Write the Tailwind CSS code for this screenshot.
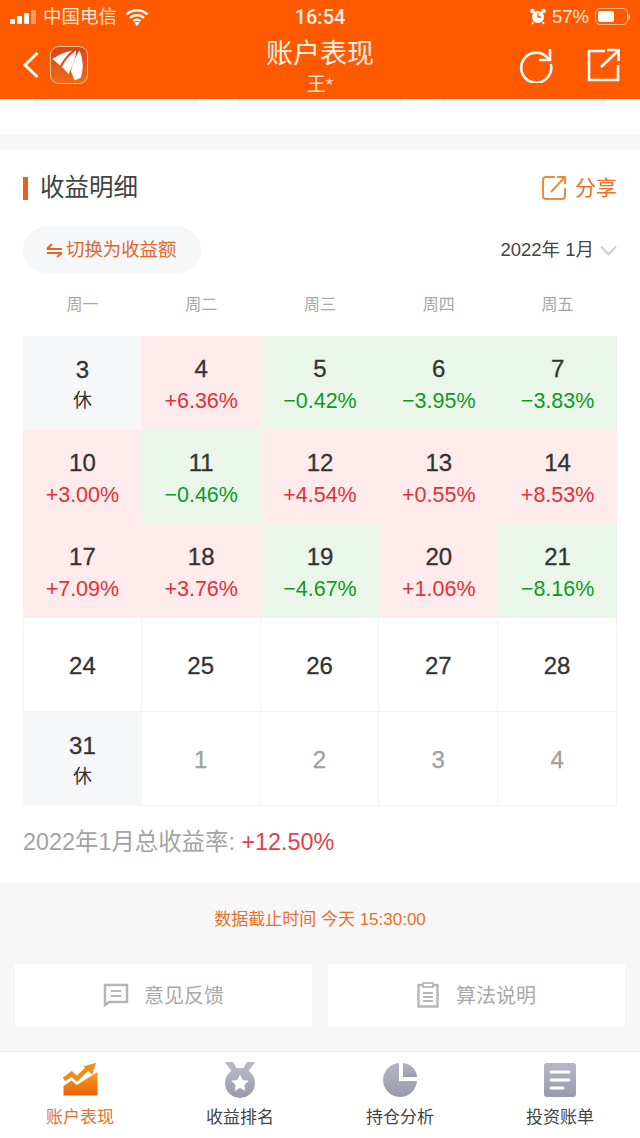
<!DOCTYPE html>
<html><head><meta charset="utf-8"><script src="https://cdn.jsdelivr.net/npm/@tailwindcss/browser@4"></script></head>
<body class="m-0 bg-white">
<div class="w-[640px] h-[1138px] overflow-hidden flex flex-col bg-[#f7f7f7] font-['Liberation_Sans','Noto_Sans_CJK_SC',sans-serif]">
  <header class="h-[99px] shrink-0 bg-[#ff5a00] text-white relative">
    <div class="h-[33px] flex items-center justify-between px-[10px] text-[18px]">
      <div class="flex items-center gap-[6px] w-[200px]">
        <svg width="26" height="14" viewBox="0 0 26 14"><rect x="0" y="9" width="5" height="5" rx="1" fill="#fff"/><rect x="7" y="6" width="5" height="8" rx="1" fill="#fff"/><rect x="14" y="3" width="5" height="11" rx="1" fill="#fff"/><rect x="21" y="0" width="5" height="14" rx="1" fill="#ffffff66"/></svg>
        <span class="text-[#ffe6d6] ml-[1px] text-[18.5px]">中国电信</span>
        <svg width="24" height="18" viewBox="0 0 24 18" class="ml-[2px]"><path d="M1.500 6.500a15 15 0 0 1 21 0M5 10a10 10 0 0 1 14 0M8.500 13.200a5 5 0 0 1 7 0" fill="none" stroke="#fff" stroke-width="2.400"/><path d="M12 18l-2.500-3a3.500 3.500 0 0 1 5 0z" fill="#fff"/></svg>
      </div>
      <div class="text-[#fff1e8] text-[20px] font-['Roboto'] font-medium">16:54</div>
      <div class="flex items-center justify-end gap-[6px] w-[200px]">
        <svg width="16" height="17" viewBox="0 0 16 17"><circle cx="8" cy="9" r="6" fill="#fff"/><path d="M8 5.500V9h3" fill="none" stroke="#ff5a00" stroke-width="1.300"/><circle cx="2.500" cy="3" r="2.300" fill="#fff"/><circle cx="13.500" cy="3" r="2.300" fill="#fff"/><path d="M3.500 14l-1.500 2M12.500 14l1.500 2" stroke="#fff" stroke-width="1.500"/></svg>
        <span class="text-[#ffe6d6] text-[18.5px]">57%</span>
        <div class="flex items-center">
          <div class="w-[33px] h-[17px] rounded-[5px] border border-[#ffb48a] p-[2px]"><div class="w-[16px] h-full bg-white rounded-[2px]"></div></div>
          <div class="w-[2px] h-[6px] bg-[#ffb48a] rounded-r-sm"></div>
        </div>
      </div>
    </div>
    <div class="relative h-[66px]">
      <svg class="absolute left-[22px] top-[18px]" width="18" height="28" viewBox="0 0 18 28"><path d="M15.500 2L3 14l12.500 12" fill="none" stroke="#fff" stroke-width="3"/></svg>
      <div class="absolute left-[50px] top-[13px] w-[38px] h-[38px] rounded-[9px] border border-[#ffc09a] bg-gradient-to-b from-[#d9431c] to-[#f06a14] overflow-hidden">
        <svg width="36" height="36" viewBox="0 0 36 36"><path d="M1.500 12C7 8 14 5 21 3.500 16 8 12 13 9 18.500z" fill="#fff"/><path d="M11 20C14 13 19 8 25 3.500 25 10 22 18 17.500 27z" fill="#fff"/><path d="M20 24C22 15 25 9 28.500 3.500 32 12 33 22 29.500 31l-6 2.500z" fill="#fff"/></svg>
      </div>
      <div class="absolute inset-x-0 top-[3px] text-center text-[27px] leading-[36px] text-[#fff1e8]">账户表现</div>
      <div class="absolute inset-x-0 top-[40px] text-center text-[19px] leading-[24px] text-[#ffe0cc]">王*</div>
      <svg class="absolute left-[519px] top-[14px]" width="36" height="36" viewBox="0 0 36 36"><path d="M30.500 13A15 15 0 1 0 33 19" fill="none" stroke="#fff" stroke-width="2.600" stroke-linecap="round" transform="translate(-1 -1)"/><path d="M31 2v11H20" fill="none" stroke="#fff" stroke-width="2.600"/></svg>
      <svg class="absolute left-[587px] top-[15px]" width="34" height="34" viewBox="0 0 34 34"><path d="M18 3H2v29h29V17" fill="none" stroke="#fff" stroke-width="2.600"/><path d="M14 19L31 3M20 2h11.500v11" fill="none" stroke="#fff" stroke-width="2.600"/></svg>
    </div>
  </header>

  <div class="h-[35px] shrink-0 bg-white relative">
    <div class="flex h-[6px] pl-[33px]">
      <div class="w-[165px] bg-[#f6f7fb]"></div>
      <div class="w-[165px] ml-[39px] bg-[#f6f7fb]"></div>
      <div class="w-[165px] ml-[39px] bg-[#f6f7fb]"></div>
    </div>
  </div>
  <div class="h-[15px] shrink-0 bg-[#f7f7f7]"></div>

  <section class="h-[733px] shrink-0 bg-white px-[23px] relative">
    <div class="flex items-center justify-between pt-[18px] h-[77px] pb-[17px]">
      <div class="flex items-center">
        <div class="w-[5px] h-[23px] bg-[#e8601c]"></div>
        <div class="ml-[12px] text-[24.500px] leading-[30px] text-[#444]">收益明细</div>
      </div>
      <div class="flex items-center gap-[8px]">
        <svg width="26" height="26" viewBox="0 0 26 26"><path d="M14 2H5a3 3 0 0 0-3 3v16a3 3 0 0 0 3 3h16a3 3 0 0 0 3-3v-8" fill="none" stroke="#f08a3c" stroke-width="2"/><path d="M10 17L23 3M16 2h8v7" fill="none" stroke="#f08a3c" stroke-width="2"/></svg>
        <span class="text-[21px] leading-[30px] text-[#e8702c]">分享</span>
      </div>
    </div>
    <div class="flex items-center justify-between mt-[1px]">
      <div class="w-[178px] h-[46px] rounded-[23px] bg-[#f6f7f9] flex items-center pl-[23px] text-[#e0662a]">
        <svg width="17" height="16" viewBox="0 0 17 16"><path d="M1 7h15M1 7l5-5M1 11h15M16 11l-5 4" fill="none" stroke="#e0662a" stroke-width="2"/></svg>
        <span class="ml-[3px] text-[18.400px] leading-[24px]">切换为收益额</span>
      </div>
      <div class="flex items-center text-[18.500px] text-[#444]">
        <span>2022年 1月</span>
        <svg class="ml-[6px]" width="17" height="11" viewBox="0 0 17 11"><path d="M1 1.500l7.500 8 7.500-8" fill="none" stroke="#d0d0d0" stroke-width="2.200"/></svg>
      </div>
    </div>
    <div class="grid grid-cols-5 w-[594px] h-[63px] items-center text-center text-[16px] text-[#a8a8a8]">
      <div>周一</div><div>周二</div><div>周三</div><div>周四</div><div>周五</div>
    </div>
    <div class="grid grid-cols-5 w-[594px] grid-rows-[94px_94px_94px_94px_94px] text-center">
      <div class="bg-[#f6f7f9] flex flex-col justify-center pt-[3px]"><div class="text-[24px] leading-[32px] text-[#333] [-webkit-text-stroke:0.3px]">3</div><div class="text-[19px] leading-[30px] text-[#333]">休</div></div>
      <div class="bg-[#ffebeb] flex flex-col justify-center pt-[3px]"><div class="text-[24px] leading-[32px] text-[#333] [-webkit-text-stroke:0.3px]">4</div><div class="text-[21.500px] leading-[32px] text-[#e2303a]">+6.36%</div></div>
      <div class="bg-[#eaf6ea] flex flex-col justify-center pt-[3px]"><div class="text-[24px] leading-[32px] text-[#333] [-webkit-text-stroke:0.3px]">5</div><div class="text-[21.500px] leading-[32px] text-[#0f9a1e]">−0.42%</div></div>
      <div class="bg-[#eaf6ea] flex flex-col justify-center pt-[3px]"><div class="text-[24px] leading-[32px] text-[#333] [-webkit-text-stroke:0.3px]">6</div><div class="text-[21.500px] leading-[32px] text-[#0f9a1e]">−3.95%</div></div>
      <div class="bg-[#eaf6ea] flex flex-col justify-center pt-[3px]"><div class="text-[24px] leading-[32px] text-[#333] [-webkit-text-stroke:0.3px]">7</div><div class="text-[21.500px] leading-[32px] text-[#0f9a1e]">−3.83%</div></div>

      <div class="bg-[#ffebeb] flex flex-col justify-center pt-[3px]"><div class="text-[24px] leading-[32px] text-[#333] [-webkit-text-stroke:0.3px]">10</div><div class="text-[21.500px] leading-[32px] text-[#e2303a]">+3.00%</div></div>
      <div class="bg-[#eaf6ea] flex flex-col justify-center pt-[3px]"><div class="text-[24px] leading-[32px] text-[#333] [-webkit-text-stroke:0.3px]">11</div><div class="text-[21.500px] leading-[32px] text-[#0f9a1e]">−0.46%</div></div>
      <div class="bg-[#ffebeb] flex flex-col justify-center pt-[3px]"><div class="text-[24px] leading-[32px] text-[#333] [-webkit-text-stroke:0.3px]">12</div><div class="text-[21.500px] leading-[32px] text-[#e2303a]">+4.54%</div></div>
      <div class="bg-[#ffebeb] flex flex-col justify-center pt-[3px]"><div class="text-[24px] leading-[32px] text-[#333] [-webkit-text-stroke:0.3px]">13</div><div class="text-[21.500px] leading-[32px] text-[#e2303a]">+0.55%</div></div>
      <div class="bg-[#ffebeb] flex flex-col justify-center pt-[3px]"><div class="text-[24px] leading-[32px] text-[#333] [-webkit-text-stroke:0.3px]">14</div><div class="text-[21.500px] leading-[32px] text-[#e2303a]">+8.53%</div></div>

      <div class="bg-[#ffebeb] flex flex-col justify-center pt-[3px]"><div class="text-[24px] leading-[32px] text-[#333] [-webkit-text-stroke:0.3px]">17</div><div class="text-[21.500px] leading-[32px] text-[#e2303a]">+7.09%</div></div>
      <div class="bg-[#ffebeb] flex flex-col justify-center pt-[3px]"><div class="text-[24px] leading-[32px] text-[#333] [-webkit-text-stroke:0.3px]">18</div><div class="text-[21.500px] leading-[32px] text-[#e2303a]">+3.76%</div></div>
      <div class="bg-[#eaf6ea] flex flex-col justify-center pt-[3px]"><div class="text-[24px] leading-[32px] text-[#333] [-webkit-text-stroke:0.3px]">19</div><div class="text-[21.500px] leading-[32px] text-[#0f9a1e]">−4.67%</div></div>
      <div class="bg-[#ffebeb] flex flex-col justify-center pt-[3px]"><div class="text-[24px] leading-[32px] text-[#333] [-webkit-text-stroke:0.3px]">20</div><div class="text-[21.500px] leading-[32px] text-[#e2303a]">+1.06%</div></div>
      <div class="bg-[#eaf6ea] flex flex-col justify-center pt-[3px]"><div class="text-[24px] leading-[32px] text-[#333] [-webkit-text-stroke:0.3px]">21</div><div class="text-[21.500px] leading-[32px] text-[#0f9a1e]">−8.16%</div></div>

      <div class="border-r border-b border-l border-[#f3f3f3] flex items-center justify-center pt-[2px] text-[24px] text-[#333] [-webkit-text-stroke:0.3px_#333]">24</div>
      <div class="border-r border-b border-[#f3f3f3] flex items-center justify-center pt-[2px] text-[24px] text-[#333] [-webkit-text-stroke:0.3px_#333]">25</div>
      <div class="border-r border-b border-[#f3f3f3] flex items-center justify-center pt-[2px] text-[24px] text-[#333] [-webkit-text-stroke:0.3px_#333]">26</div>
      <div class="border-r border-b border-[#f3f3f3] flex items-center justify-center pt-[2px] text-[24px] text-[#333] [-webkit-text-stroke:0.3px_#333]">27</div>
      <div class="border-r border-b border-[#f3f3f3] flex items-center justify-center pt-[2px] text-[24px] text-[#333] [-webkit-text-stroke:0.3px_#333]">28</div>

      <div class="bg-[#f6f7f9] flex flex-col justify-center pt-[3px]"><div class="text-[24px] leading-[32px] text-[#333] [-webkit-text-stroke:0.3px]">31</div><div class="text-[19px] leading-[30px] text-[#333]">休</div></div>
      <div class="border-r border-b border-[#f3f3f3] flex items-center justify-center pt-[2px] text-[24px] text-[#a0a0a0] [-webkit-text-stroke:0.3px_#a0a0a0]">1</div>
      <div class="border-r border-b border-[#f3f3f3] flex items-center justify-center pt-[2px] text-[24px] text-[#a0a0a0] [-webkit-text-stroke:0.3px_#a0a0a0]">2</div>
      <div class="border-r border-b border-[#f3f3f3] flex items-center justify-center pt-[2px] text-[24px] text-[#a0a0a0] [-webkit-text-stroke:0.3px_#a0a0a0]">3</div>
      <div class="border-r border-b border-[#f3f3f3] flex items-center justify-center pt-[2px] text-[24px] text-[#a0a0a0] [-webkit-text-stroke:0.3px_#a0a0a0]">4</div>
    </div>
    <div class="mt-[21px] text-[23.400px] leading-[30px] text-[#a3a3a3]">2022年1月总收益率: <span class="text-[#e2404a]">+12.50%</span></div>
  </section>

  <div class="text-center text-[17px] leading-[22px] text-[#e8702c] pt-[27px] h-[82px] shrink-0">数据截止时间 今天 15:30:00</div>
  <div class="flex gap-[16px] px-[15px] h-[62px] shrink-0">
    <div class="flex-1 bg-white flex items-center justify-center gap-[15px] text-[20px] text-[#a9a9a9]">
      <svg width="26" height="24" viewBox="0 0 26 24"><path d="M2 2h22v17H6l-4 3z" fill="none" stroke="#b5b6bd" stroke-width="2.400"/><path d="M8 8h10M8 13h10" stroke="#b5b6bd" stroke-width="2"/></svg>
      <span class="pt-[2px]">意见反馈</span>
    </div>
    <div class="flex-1 bg-white flex items-center justify-center gap-[17px] text-[20px] text-[#a9a9a9]">
      <svg width="22" height="26" viewBox="0 0 22 26"><path d="M6 3H1.500v21.500h19V3H16" fill="none" stroke="#b5b6bd" stroke-width="2.400"/><rect x="6" y="1" width="10" height="4" fill="none" stroke="#b5b6bd" stroke-width="1.800"/><path d="M6 11h10M6 15h10M6 19h10" stroke="#b5b6bd" stroke-width="2"/></svg>
      <span class="pt-[2px]">算法说明</span>
    </div>
  </div>
  <div class="h-[25px] shrink-0"></div>
  <nav class="flex-1 bg-white border-t border-[#ececec] grid grid-cols-4 text-[17px] leading-[22px] text-[#444] text-center">
    <div class="flex flex-col items-center pt-[10px] text-[#e8702c]">
      <svg width="36" height="36" viewBox="0 0 36 36"><defs><linearGradient id="a" x1="0" y1="0" x2="0" y2="1"><stop offset="0" stop-color="#f9a01e"/><stop offset="1" stop-color="#e8600a"/></linearGradient></defs><path d="M1.500 24l8.200-5.500 5 4.500L35.500 10v23.500H1.500z" fill="url(#a)"/><path d="M2 17.500l7.700-5.500 5.200 4.700L26 6" fill="none" stroke="#f28b1a" stroke-width="4.500"/><path d="M21.300 4.500L34 .7l-3.700 11.800z" fill="#f28b1a"/></svg>
      <span class="mt-[9px]">账户表现</span>
    </div>
    <div class="flex flex-col items-center pt-[10px]">
      <svg width="36" height="36" viewBox="0 0 36 36"><defs><linearGradient id="b" x1="0" y1="0" x2="0" y2="1"><stop offset="0" stop-color="#b6b6c6"/><stop offset="1" stop-color="#9a9aae"/></linearGradient></defs><path d="M3 0h8l6 10-5 3zM33 0h-8l-6 10 5 3z" fill="#b6b6c6"/><circle cx="18" cy="21" r="15" fill="url(#b)"/><path d="M18 12.500l2.700 5.400 6 .9-4.300 4.200 1 5.900-5.400-2.800-5.400 2.800 1-5.900-4.300-4.200 6-.9z" fill="#fff"/></svg>
      <span class="mt-[9px]">收益排名</span>
    </div>
    <div class="flex flex-col items-center pt-[10px]">
      <svg width="36" height="36" viewBox="0 0 36 36"><defs><linearGradient id="c" x1="0" y1="0" x2="0" y2="1"><stop offset="0" stop-color="#b6b6c6"/><stop offset="1" stop-color="#9a9aae"/></linearGradient></defs><path d="M17 1v18h18A17 17 0 1 1 17 1z" fill="url(#c)"/><path d="M21 1a15 15 0 0 1 14 14H21z" fill="url(#c)"/></svg>
      <span class="mt-[9px]">持仓分析</span>
    </div>
    <div class="flex flex-col items-center pt-[10px]">
      <svg width="36" height="36" viewBox="0 0 36 36"><defs><linearGradient id="d" x1="0" y1="0" x2="0" y2="1"><stop offset="0" stop-color="#b6b6c6"/><stop offset="1" stop-color="#9a9aae"/></linearGradient></defs><rect x="2" y="1" width="32" height="34" rx="3" fill="url(#d)"/><path d="M9 10h18M9 18h18M9 26h12" stroke="#fff" stroke-width="3" stroke-linecap="round"/></svg>
      <span class="mt-[9px]">投资账单</span>
    </div>
  </nav>
</div>
</body></html>
